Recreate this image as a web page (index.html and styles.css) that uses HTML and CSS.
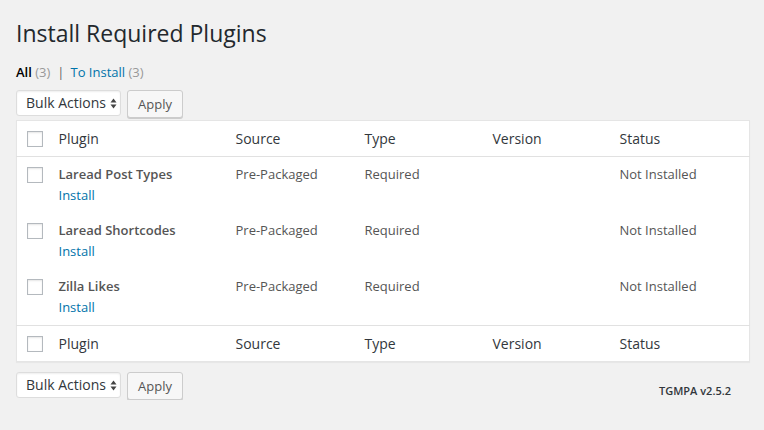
FILE: index.html
```html
<!DOCTYPE html>
<html>
<head>
<meta charset="utf-8">
<link rel="stylesheet" href="styles.css">
</head>
<body>
<div class="wrap">
  <h1 class="title">Install Required Plugins</h1>
  <ul class="subsubsub">
    <li><span class="current">All</span> <span class="count">(3)</span></li>
    <li class="sep">|</li>
    <li><a class="link">To Install</a> <span class="count">(3)</span></li>
  </ul>
  <div class="tablenav">
    <div class="select">Bulk Actions<svg class="arrows" width="7" height="11" viewBox="0 0 7 11"><path d="M3.5 0.5 L6.5 4.5 L0.5 4.5 Z M3.5 10.5 L6.5 6.5 L0.5 6.5 Z" fill="#444"/></svg></div>
    <div class="button">Apply</div>
  </div>
  <table class="plugins">
    <colgroup>
      <col class="c-check"><col class="c-plugin"><col class="c-source"><col class="c-type"><col class="c-version"><col>
    </colgroup>
    <thead>
      <tr><th class="check"><span class="cb"></span></th><th>Plugin</th><th>Source</th><th>Type</th><th>Version</th><th>Status</th></tr>
    </thead>
    <tbody>
      <tr><td class="check"><span class="cb"></span></td><td><strong>Laread Post Types</strong><div class="row-actions"><a class="link">Install</a></div></td><td>Pre-Packaged</td><td>Required</td><td></td><td>Not Installed</td></tr>
      <tr><td class="check"><span class="cb"></span></td><td><strong>Laread Shortcodes</strong><div class="row-actions"><a class="link">Install</a></div></td><td>Pre-Packaged</td><td>Required</td><td></td><td>Not Installed</td></tr>
      <tr><td class="check"><span class="cb"></span></td><td><strong>Zilla Likes</strong><div class="row-actions"><a class="link">Install</a></div></td><td>Pre-Packaged</td><td>Required</td><td></td><td>Not Installed</td></tr>
    </tbody>
    <tfoot>
      <tr><th class="check"><span class="cb"></span></th><th>Plugin</th><th>Source</th><th>Type</th><th>Version</th><th>Status</th></tr>
    </tfoot>
  </table>
  <div class="tablenav bottom">
    <div class="select">Bulk Actions<svg class="arrows" width="7" height="11" viewBox="0 0 7 11"><path d="M3.5 0.5 L6.5 4.5 L0.5 4.5 Z M3.5 10.5 L6.5 6.5 L0.5 6.5 Z" fill="#444"/></svg></div>
    <div class="button">Apply</div>
    <div class="version">TGMPA v2.5.2</div>
  </div>
</div>
</body>
</html>
```

FILE: styles.css
```css
html, body {
  margin: 0;
  padding: 0;
  background: #f1f1f1;
  font-family: "Open Sans", "Noto Sans", sans-serif;
  font-size: 13px;
  color: #444;
}
.wrap {
  padding: 0 14px 0 16px;
}
.title {
  margin: 0;
  padding-top: 19px;
  font-size: 23px;
  line-height: 29px;
  font-weight: 400;
  color: #23282d;
}
.subsubsub {
  list-style: none;
  margin: 15px 0 0 0;
  padding: 0;
  display: flex;
  font-size: 13px;
  line-height: 18px;
  color: #666;
}
.subsubsub li { white-space: pre; }
.subsubsub .current { color: #000; font-weight: 600; }
.subsubsub .count { color: #999; }
.subsubsub .sep { color: #666; margin: 0 6px 0 7px; }
.link { color: #0073aa; text-decoration: none; }
.tablenav {
  margin-top: 9px;
  height: 28px;
  display: flex;
  align-items: flex-start;
  gap: 6px;
}
.tablenav.bottom { margin-top: 10px; }
.select {
  box-sizing: border-box;
  height: 26px;
  width: 105px;
  padding: 0 0 0 9px;
  background: #fff;
  border: 1px solid #ddd;
  border-radius: 3px;
  box-shadow: inset 0 1px 2px rgba(0,0,0,.07);
  color: #32373c;
  font-size: 14px;
  line-height: 24px;
  display: flex;
  align-items: center;
  gap: 4px;
}
.arrows { flex: none; }
.button {
  box-sizing: border-box;
  height: 28px;
  padding: 0 10px;
  background: #f7f7f7;
  border: 1px solid #ccc;
  border-radius: 3px;
  box-shadow: 0 1px 0 #ccc;
  color: #555;
  font-size: 13px;
  line-height: 26px;
}
.version {
  margin-left: auto;
  margin-right: 19px;
  margin-top: 11px;
  font-size: 11px;
  font-weight: 600;
  color: #32373c;
  line-height: 16px;
}
.plugins {
  width: 100%;
  margin-top: 2px;
  border-collapse: collapse;
  table-layout: fixed;
  background: #fff;
  border: 1px solid #e5e5e5;
  box-shadow: 0 1px 1px rgba(0,0,0,.04);
}
.c-check { width: 32px; }
.c-plugin { width: 177px; }
.c-source { width: 129px; }
.c-type { width: 128px; }
.c-version { width: 127px; }
.plugins th {
  text-align: left;
  font-weight: 400;
  font-size: 14px;
  color: #32373c;
  height: 35px;
  padding: 0 10px;
  line-height: 19px;
  vertical-align: middle;
}
.plugins thead tr { border-bottom: 1px solid #e1e1e1; }
.plugins tfoot tr { border-top: 1px solid #e1e1e1; }
.plugins td {
  padding: 8px 10px;
  vertical-align: top;
  font-size: 13px;
  line-height: 19px;
  color: #555;
}
.plugins td strong { font-weight: 600; color: #555; }
.row-actions { padding-top: 2px; line-height: 19px; }
.plugins .check { padding: 0 0 0 10px; }
.plugins td.check { padding-top: 10px; }
.cb {
  display: block;
  box-sizing: border-box;
  width: 16px;
  height: 16px;
  border: 1px solid #b4b9be;
  background: #fff;
  box-shadow: inset 0 1px 2px rgba(0,0,0,.1);
}
```
